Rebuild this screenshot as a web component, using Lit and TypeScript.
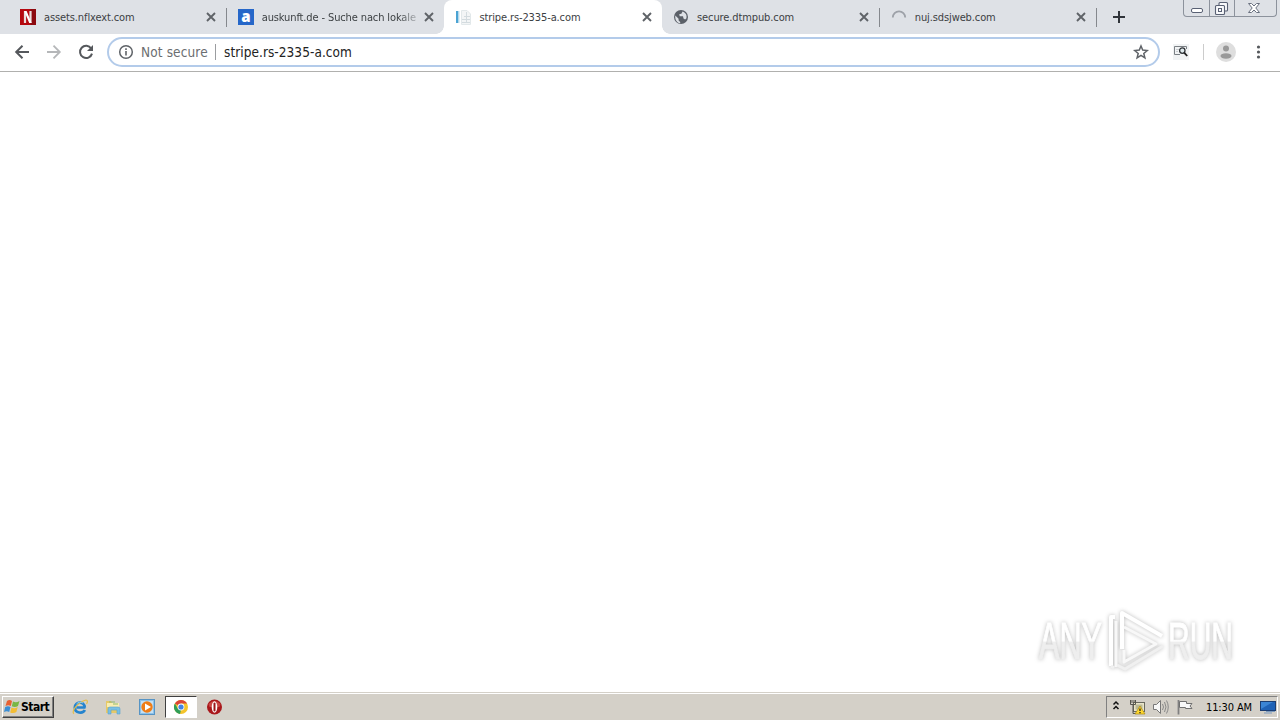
import { LitElement, html, css, svg } from 'lit';
import { customElement, property, state } from 'lit/decorators.js';

const icons: Record<string, unknown> = {
    netflix: svg`<rect width="16" height="16" fill="#b5080f"/><rect x="10.5" width="5.5" height="16" fill="#8c0a10"/>
        <path d="M5 2V14M10.500 2V14" stroke="#e9dede" stroke-width="2.2"/><path d="M4.2 2H6.6L11.6 14H9.2Z" fill="#fff"/>`,
    auskunft: svg`<rect width="16" height="16" fill="#2667c9"/><text x="8" y="12.6" text-anchor="middle" fill="#fff" font-family="Open Sans, sans-serif" font-weight="800" font-size="15">a</text>`,
    page: svg`<rect x="1" y="2" width="2.500" height="12" fill="#4ba3d3"/><path d="M4 2V14" stroke="#c5e0ee"/>
        <path d="M6.500 1.500H12L15.500 5V15.500H6.500Z" fill="#f3f5f6" stroke="#e2e8ea"/><path d="M9 7.500H15M7 10.500H15M7 13.500H15M11.500 3V14" stroke="#d3dbdf" fill="none"/>`,
    globe: svg`<circle cx="8" cy="8" r="7" fill="#5b6068"/><path d="M2.300 6.500L5.600 9.800V11.500L7.200 13V14.200C3.900 13.700 1.800 11 2.300 6.500ZM9.500 2.500L8.400 4.700 6.200 5.200 6.700 7.200H10L10.500 9.400 12.100 10.600 13.300 9.500C14.300 6.800 12.900 3.500 9.500 2.500Z" fill="#dee1e6"/>`,
    spinner: svg`<path d="M1.800 8.500A6.200 6.200 0 1 1 14.200 8.500" fill="none" stroke="#9da1a8" stroke-width="1.800"/>`,
    close: svg`<path d="M4 4L12 12M12 4L4 12" stroke="#5f6368" stroke-width="1.900"/>`,
    plus: svg`<path d="M8 2V14M2 8H14" stroke="#30343a" stroke-width="2"/>`,
    back: svg`<path d="M15 8H2.500M8.500 1.700L2.200 8L8.500 14.300" fill="none" stroke="#55585c" stroke-width="2"/>`,
    forward: svg`<path d="M1 8H13.500M7.500 1.700L13.800 8L7.500 14.300" fill="none" stroke="#b5b7b9" stroke-width="1.800"/>`,
    reload: svg`<path d="M13.200 4.500A6.100 6.100 0 1 0 14 9.600" fill="none" stroke="#55585c" stroke-width="2"/><path d="M15 1V7H9Z" fill="#55585c"/>`,
    info: svg`<circle cx="8" cy="8" r="6.300" fill="none" stroke="#5f6368" stroke-width="1.500"/><path d="M8 7V11.500M8 4.300V5.900" stroke="#5f6368" stroke-width="1.600"/>`,
    star: svg`<path d="M8 2L9.700 6.100 14.200 6.500 10.800 9.400 11.900 13.800 8 11.400 4.100 13.800 5.200 9.400 1.800 6.500 6.300 6.100Z" fill="none" stroke="#5f6368" stroke-width="1.500"/>`,
    search: svg`<rect width="16" height="16" fill="#f1f3f4"/><path d="M7 10.500H1.500V2.500H13.500V5" fill="none" stroke="#7b8085"/><path d="M3 5.500H6M3 7.500H5" stroke="#c8ccd0"/><circle cx="9.300" cy="6.600" r="2.700" fill="#dfeaed" stroke="#303438" stroke-width="1.300"/><path d="M11.200 8.600L14.200 12" stroke="#222" stroke-width="1.800"/>`,
    avatar: svg`<circle cx="10" cy="10" r="10" fill="#dedede"/><circle cx="10" cy="6.500" r="3" fill="#999"/><ellipse cx="10" cy="14" rx="5.500" ry="2.700" fill="#999"/>`,
    dots: svg`<circle cx="8.500" cy="3" r="1.600" fill="#55585c"/><circle cx="8.500" cy="8" r="1.600" fill="#55585c"/><circle cx="8.500" cy="13" r="1.600" fill="#55585c"/>`,
    minimize: svg`<rect x="2.500" y="8.500" width="11" height="4" rx="1.500" fill="#fff" stroke="#596174"/>`,
    restore: svg`<rect x="5" y="2.500" width="8.500" height="8.500" rx="1" fill="#f8f9fb" stroke="#596174" stroke-width="1.100"/><rect x="1.500" y="5.500" width="9" height="9" rx="1" fill="#f8f9fb" stroke="#596174" stroke-width="1.100"/><rect x="4.500" y="8.500" width="3" height="3" fill="none" stroke="#596174"/>`,
    exit: svg`<path d="M2.500 3.500H5.500L8 6L10.500 3.500H13.500L9.800 8L13.500 12.500H10.500L8 10L5.500 12.500H2.500L6.200 8Z" fill="#fff" stroke="#6a7180"/>`,
    windows: svg`<path d="M3 2C5 .5 6.500 1 8 2L6.800 7C5 6 3.500 6 1.500 7Z" fill="#e86132"/><path d="M9 2.500C11 3.500 13 3.500 15.500 2L14 7C12 8.300 10 8.300 7.800 7.300Z" fill="#79b745"/>
        <path d="M1.200 8C3.200 7 4.800 7 6.500 8L5.200 13C3.500 12 2 12 0 13Z" fill="#3b8ed4"/><path d="M7.500 8.500C9.500 9.500 11.500 9.500 13.700 8L12.400 13C10.400 14.500 8 14.300 6.200 13.400Z" fill="#f3bd35"/>`,
    explorer: svg`<path d="M13.500 8.500H4.500M12.800 11C11 15 2.800 14.500 2.800 8.500C2.800 2.500 12.500 1.500 12.800 8.500" fill="none" stroke="#2584ce" stroke-width="2.700"/><path d="M2 14.800C-1.500 13 6 3 14 1C16 1 15.500 3.500 14.500 5" fill="none" stroke="#e4bd48" stroke-width="1.200"/><path d="M4.500 5C6 3 9 2.700 11 4" stroke="#8bcff4" fill="none"/>`,
    folder: svg`<path d="M1 2H6L7 4H14V14H1Z" fill="#e6c968"/><path d="M2 4H14V8H2Z" fill="#f8edb2"/><path d="M4 3H10M8 5H13" stroke="#8fb973"/><path d="M3 15V10Q3 8 5 8H13Q15 8 15 10V15H12V11H6V15Z" fill="#78bfe4" stroke="#58a2cc" stroke-width=".6"/>`,
    player: svg`<rect x=".5" y=".5" width="15" height="15" fill="#8cc2ea" stroke="#5794c4"/><rect x="2" y="2" width="12" height="12" fill="#c4e0f4"/><circle cx="8" cy="8" r="5.700" fill="#ef7d17"/><path d="M6 4.500L12 8L6 11.500Z" fill="#fff"/>`,
    chrome: svg`<circle cx="8" cy="8" r="7" fill="#f4c42b"/><path d="M8 8L1.900 4.500A7 7 0 0 1 14.100 4.500H8Z" fill="#db4537"/><path d="M1.900 4.500L5 10L8 11L7 15A7 7 0 0 1 1.900 4.500Z" fill="#2f9e58"/><circle cx="8" cy="8" r="3.400" fill="#fff"/><circle cx="8" cy="8" r="2.600" fill="#4383e4"/>`,
    opera: svg`<circle cx="8.500" cy="8" r="7.500" fill="#a9171b"/><path d="M2.500 5Q8.500-1 14.500 5L13.500 8H3.500Z" fill="#ca4744"/><ellipse cx="8.500" cy="8" rx="2.800" ry="5.800" fill="#fff"/><rect x="7.500" y="3.500" width="2" height="9" rx="1" fill="#9c1418"/>`,
    chevrons: svg`<path d="M5.500 5.500L8 3L10.500 5.500M5.500 10L8 7.500L10.500 10" fill="none" stroke="#111" stroke-width="1.500"/>`,
    network: svg`<rect x="4.500" y="3.500" width="11" height="9" fill="#e9e5c9" stroke="#68685e"/><rect x="6.500" y="5.500" width="7" height="5" fill="#bbb994"/><path d="M1.500 1V5.500H6.500V1M3 1V4M5 1V4M4 6V14.500H10" fill="none" stroke="#55554d"/><path d="M11 7L16 15H6Z" fill="#ffd72e" stroke="#a98a10" stroke-width=".7"/><path d="M11 9.500V12M11 13V14.200" stroke="#222" stroke-width="1.300"/>`,
    volume: svg`<path d="M.5 5.500H3.500L7.500 1.500V14.500L3.500 10.500H.5Z" fill="#f7f7f7" stroke="#777"/><path d="M9.500 5Q11.500 8 9.500 11M11.500 3Q14.500 8 11.500 13M13.500 1.500Q17 8 13.500 14.500" fill="none" stroke="#898989"/>`,
    flag: svg`<path d="M1.500 1V15.500" stroke="#808080" stroke-width="1.800"/><path d="M2.500 2.500H9.500V4.500H15L13 7L15 9.500H8.500V8.500H2.500Z" fill="#f8f8f8" stroke="#707070"/>`,
    desktop: svg`<rect x=".5" y="2.500" width="15" height="9" fill="#1f62b6" stroke="#1c3e72"/><path d="M1 3H13L1 10Z" fill="#3b85d5"/><path d="M6 12.500H15M4 14H12" stroke="#7c9abd"/>`,
};

const icon = (name: string, size = 16, box = 16) =>
    html`<svg class="icon" width="${size}" height="${size}" viewBox="0 0 ${box} ${box}">${icons[name]}</svg>`;

const shared = css`
    * { box-sizing: border-box; }
    .icon { display: block; flex: none; overflow: visible; }
`;

@customElement('browser-tab')
export class BrowserTab extends LitElement {
    @property() icon = '';
    @property() label = '';
    @property({ type: Boolean, reflect: true }) active = false;
    @property({ type: Boolean, reflect: true }) divided = false;

    static styles = [shared, css`
    :host {
        box-sizing: border-box;
        display: flex;
        align-items: center;
        width: 217.700px;
        height: 34px;
        padding: 0 7px 0 11px;
        flex: none;
        position: relative;
        color: #3c4043;
    }
    :host([active]) {
        background: #fff;
        border-radius: 8px 8px 0 0;
    }
    :host([active])::before, :host([active])::after {
        content: '';
        position: absolute;
        bottom: 0;
        width: 8px;
        height: 8px;
    }
    :host([active])::before {
        left: -8px;
        background: radial-gradient(circle at 0 0, transparent 7.500px, #fff 8px);
    }
    :host([active])::after {
        right: -8px;
        background: radial-gradient(circle at 100% 0, transparent 7.500px, #fff 8px);
    }
    .divider { width: 1px; height: 19px; margin: 0 -7px 0 7px; background: #85888d; }
    :host([divided]) { padding-right: 6px; }
    :host([divided]) .divider { margin: 0 -6px 0 7px; }
    .title {
        flex: 1;
        margin: 0 4px 0 8px;
        padding-top: 1px;
        white-space: nowrap;
        font: 11px/18px 'DejaVu Sans Condensed', 'DejaVu Sans', sans-serif;
        letter-spacing: -0.110px;
    }
    .fade {
        letter-spacing: -0.120px;
        mask-image: linear-gradient(90deg, #000 88%, rgba(0, 0, 0, .25));
    }
  `];

    render() {
        return html`
      ${icon(this.icon)}
      <span class="title ${this.label.length > 25 ? 'fade' : ''}">${this.label}</span>
      ${icon('close')}
      ${this.divided ? html`<span class="divider"></span>` : ''}
    `;
    }
}

@customElement('app-root')
export class AppRoot extends LitElement {
    @state() tabs = [
        { icon: 'netflix', label: 'assets.nflxext.com', divided: true },
        { icon: 'auskunft', label: 'auskunft.de - Suche nach lokale' },
        { icon: 'page', label: 'stripe.rs-2335-a.com', active: true },
        { icon: 'globe', label: 'secure.dtmpub.com', divided: true },
        { icon: 'spinner', label: 'nuj.sdsjweb.com', divided: true },
    ];

    static styles = [shared, css`
    :host {
        display: flex;
        flex-direction: column;
        width: 1280px;
        height: 720px;
        overflow: hidden;
        background: #fff;
        font-family: 'DejaVu Sans Condensed', 'DejaVu Sans', sans-serif;
    }
    .strip { display: flex; height: 34px; padding-left: 9px; background: #dee1e6; flex: none; }
    .new-tab { padding: 9px 0 0 14px; }
    .controls {
        display: flex;
        height: 17px;
        margin: 0 3px 0 auto;
        border: 1px solid #8c929c;
        border-top: 0;
        border-radius: 0 0 4px 4px;
    }
    .controls span { display: grid; place-items: center; width: 25px; }
    .controls span + span { border-left: 1px solid #8c929c; }
    .controls span:last-child { width: 42px; padding-right: 3px; }
    .toolbar {
        display: flex;
        align-items: center;
        height: 38px;
        padding: 0 14px 1px;
        border-bottom: 1px solid #b0b0ae;
        flex: none;
    }
    .nav { display: flex; gap: 16px; width: 93px; }
    .omnibox {
        display: flex;
        align-items: center;
        width: 1053px;
        height: 30px;
        padding: 0 9px;
        border: 2px solid #b3cbea;
        border-radius: 15px;
        font-size: 13.500px;
        letter-spacing: 0.060px;
        color: #222;
        white-space: nowrap;
    }
    .security { width: 67px; margin-left: 7px; color: #6b6e71; letter-spacing: 0.130px; }
    .rule { width: 1px; height: 16px; background: #9b9da0; margin: 0 8px 0 7px; }
    .url { flex: 1; }
    .extension { margin-left: 13px; }
    .pipe { width: 1px; height: 16px; background: #ccc; margin: 0 12px 0 14px; }
    .menu { margin-left: 14px; }
    .page { flex: 1; display: flex; align-items: flex-end; justify-content: flex-end; padding: 0 33px 16px 0; }
    .watermark { overflow: visible; filter: drop-shadow(0 0 2px #bbb); }
    .mark-text { font: 400 52px 'Liberation Sans', sans-serif; fill: url(#fade); stroke: url(#fade); stroke-width: 1px; }
    .taskbar {
        display: flex;
        align-items: center;
        height: 28px;
        padding: 3px 2px 1px;
        background: #d4d0c8;
        box-shadow: inset 0 1px #d4d0c8, inset 0 2px #fff;
        flex: none;
    }
    .start {
        display: flex;
        align-items: center;
        width: 52px;
        height: 22px;
        padding-left: 1px;
        gap: 1px;
        border: 1px solid;
        border-color: #fff #404040 #404040 #fff;
        box-shadow: inset -1px -1px #808080;
        font: 700 12px 'DejaVu Sans Condensed', sans-serif;
        letter-spacing: -0.500px;
    }
    .quick { display: flex; margin-left: 9px; }
    .quick span { display: grid; place-items: center; width: 33.500px; height: 22px; }
    .quick .running { width: 32px; margin: 0 1px 0 1px; background: #fff; border: 1px solid; border-color: #404040 #fff #fff #404040; }
    .tray {
        display: flex;
        align-items: center;
        height: 22px;
        width: 172px;
        margin-left: auto;
        padding-left: 1px;
        border: 1px solid;
        border-color: #808080 #fff #fff #808080;
    }
    .tray .icon { margin-right: 8px; }
    .tray .icon:first-child { margin-right: 5px; }
    .tray .icon:last-child { margin-right: 0; }
    .clock { width: 48px; margin: 0 6px 0 5px; font-size: 11px; letter-spacing: -0.120px; white-space: nowrap; }
  `];

    render() {
        return html`
      <div class="strip">
        ${this.tabs.map(tab => html`
          <browser-tab .icon="${tab.icon}" .label="${tab.label}" ?active="${tab.active}" ?divided="${tab.divided}"></browser-tab>
        `)}
        <div class="new-tab">${icon('plus')}</div>
        <div class="controls">
          <span>${icon('minimize')}</span><span>${icon('restore')}</span><span>${icon('exit')}</span>
        </div>
      </div>
      <div class="toolbar">
        <div class="nav">${icon('back')}${icon('forward')}${icon('reload')}</div>
        <div class="omnibox">
          ${icon('info')}
          <span class="security">Not secure</span>
          <span class="rule"></span>
          <span class="url">stripe.rs-2335-a.com</span>
          ${icon('star')}
        </div>
        <div class="extension">${icon('search')}</div>
        <span class="pipe"></span>
        ${icon('avatar', 20, 20)}
        <div class="menu">${icon('dots')}</div>
      </div>
      <main class="page">
        <svg class="watermark" width="210" height="68" viewBox="0 0 210 68">
          <defs>
            <linearGradient id="fade" x1="0" y1="0" x2="0" y2="1">
              <stop offset=".5" stop-color="#fff"/><stop offset=".52" stop-color="#eee"/>
            </linearGradient>
          </defs>
          <path d="M74 58V9H78M85 41V5L125 28" fill="none" stroke="#fff" stroke-width="4" stroke-linejoin="round"/>
          <path d="M79 59V13M87 19L119 36L87 54V42" fill="none" stroke="#f8f8f8" stroke-width="3" stroke-linejoin="round"/>
          <path d="M80 57L88 61L126 38M74 58L77 60" fill="none" stroke="#f0f0f0" stroke-width="3"/>
          <text class="mark-text" x="2" y="51" textLength="63" lengthAdjust="spacingAndGlyphs">ANY</text>
          <text class="mark-text" x="131" y="51" textLength="65" lengthAdjust="spacingAndGlyphs">RUN</text>
        </svg>
      </main>
      <div class="taskbar">
        <div class="start">${icon('windows')}Start</div>
        <div class="quick">
          <span>${icon('explorer')}</span><span>${icon('folder')}</span><span>${icon('player')}</span>
          <span class="running">${icon('chrome')}</span><span>${icon('opera')}</span>
        </div>
        <div class="tray">
          ${icon('chevrons')}${icon('network')}${icon('volume')}${icon('flag')}
          <span class="clock">11:30 AM</span>
          ${icon('desktop')}
        </div>
      </div>
    `;
    }
}
